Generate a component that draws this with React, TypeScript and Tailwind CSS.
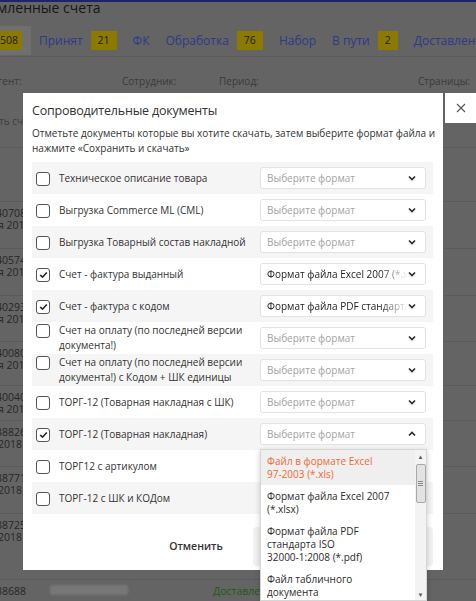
import React from 'react';

type Doc = {
  label: string;
  checked?: boolean;
  value?: string;
  open?: boolean;
};

const docs: Doc[] = [
  { label: 'Техническое описание товара' },
  { label: 'Выгрузка Commerce ML (CML)' },
  { label: 'Выгрузка Товарный состав накладной' },
  { label: 'Счет - фактура выданный', checked: true, value: 'Формат файла Excel 2007 (*.xlsx)' },
  { label: 'Счет - фактура с кодом', checked: true, value: 'Формат файла PDF стандарта ISO 32000-1:2008 (*.pdf)' },
  { label: 'Счет на оплату (по последней версии документа!)' },
  { label: 'Счет на оплату (по последней версии документа!) с Кодом + ШК единицы' },
  { label: 'ТОРГ-12 (Товарная накладная с ШК)' },
  { label: 'ТОРГ-12 (Товарная накладная)', checked: true, open: true },
  { label: 'ТОРГ12 с артикулом' },
  { label: 'ТОРГ-12 с ШК и КОДом' },
];

const formats = [
  'Файл в формате Excel 97-2003 (*.xls)',
  'Формат файла Excel 2007 (*.xlsx)',
  'Формат файла PDF стандарта ISO 32000-1:2008 (*.pdf)',
  'Файл табличного документа 1С:Предприятие (*.mxl)',
];

const tabs = [
  { name: 'Принят', count: '21' },
  { name: 'ФК' },
  { name: 'Обработка', count: '76' },
  { name: 'Набор' },
  { name: 'В пути', count: '2' },
  { name: 'Доставлено' },
];

const rows = [
  { num: '40708', date: 'я 2018', h: 'h-[47px]' },
  { num: '40574', date: 'я 2018', h: 'h-[47px]' },
  { num: '40293', date: 'я 2018', h: 'h-[46px]' },
  { num: '40080', date: 'я 2018', h: 'h-[44px]' },
  { num: '40040', date: 'я 2018', h: 'h-[35px]' },
  { num: '38826', date: '2018', h: 'h-[46px]' },
  { num: '38771', date: '2018', h: 'h-[47px]' },
  { num: '38725', date: '2018', h: 'h-[66px]' },
];

const Chevron = ({ up }: { up?: boolean }) => (
  <svg width="8" height="6" viewBox="0 0 8 6" className={up ? 'rotate-180' : ''}>
    <path d="M1 1.5 L4 4.5 L7 1.5" fill="none" stroke="#2b2b2b" strokeWidth="1.7" />
  </svg>
);

const Checkbox = ({ checked }: { checked?: boolean }) => (
  <span className="mt-[1px] flex h-[14px] w-[14px] shrink-0 items-center justify-center rounded-[3px] border-[1.5px] border-[#555] bg-white">
    {checked && (
      <svg width="9" height="8" viewBox="0 0 9 8">
        <path d="M1.2 4 L3.5 6.2 L7.8 1.5" fill="none" stroke="#222" strokeWidth="1.6" />
      </svg>
    )}
  </span>
);

// words never break on their inner hyphens ("97-2003", "32000-1:2008")
const Words = ({ text }: { text: string }) => (
  <>
    {text.split(' ').map((w, j) => (
      <React.Fragment key={j}>
        {j > 0 && ' '}
        <span className="whitespace-nowrap">{w}</span>
      </React.Fragment>
    ))}
  </>
);

const FormatDropdown = () => (
  <div className="absolute left-0 top-[26px] z-10 flex h-[152px] w-[167px] border border-[#d6d6d6] bg-white shadow-[0_2px_6px_rgba(0,0,0,0.2)]">
    <ul className="flex-1 overflow-hidden">
      {formats.map((f, i) => (
        <li
          key={f}
          className={`pb-[4px] pl-[6px] pr-[18px] pt-[5px] text-[10px] leading-[13px] ${
            i === 0 ? 'bg-[#efefef] text-[#f26a35]' : 'text-[#2b2b2b]'
          }`}
        >
          <Words text={f} />
        </li>
      ))}
    </ul>
    {/* scrollbar */}
    <div className="flex w-[11px] flex-col items-center bg-[#f3f3f3]">
      <span className="mt-[4px] text-[6px] leading-[6px] text-[#555]">▲</span>
      <div className="mt-[4px] flex h-[39px] w-[10px] flex-col items-center justify-center gap-[1px] rounded-[2px] border border-[#a9a9a9] bg-[#e2e2e2]">
        <span className="h-px w-[5px] bg-[#888]" />
        <span className="h-px w-[5px] bg-[#888]" />
        <span className="h-px w-[5px] bg-[#888]" />
      </div>
      <span className="mt-auto mb-[2px] text-[6px] leading-[6px] text-[#555]">▼</span>
    </div>
  </div>
);

const FormatSelect = ({ value, open }: { value?: string; open?: boolean }) => (
  <div className="relative ml-auto w-[166px] shrink-0">
    <div className="flex h-[22px] items-center rounded-[3px] border border-[#e2e2e2] bg-white pl-[6px] pr-[9px]">
      {value ? (
        <span className="flex-1 overflow-hidden whitespace-nowrap text-[10px] text-[#222] [mask-image:linear-gradient(to_right,black_80%,transparent)]">
          {value}
        </span>
      ) : (
        <span className="flex-1 text-[10px] text-[#a3a3a3]">Выберите формат</span>
      )}
      <Chevron up={open} />
    </div>
    {open && <FormatDropdown />}
  </div>
);

const DocumentsModal = () => (
  <>
    <div className="absolute left-[23px] top-[93px] z-20 h-[477px] w-[420px] bg-white pl-[9px] pr-[10px] pt-[8px]">
      <h2 className="text-[12.5px] leading-[20px] tracking-[-0.2px] text-[#333]">Сопроводительные документы</h2>
      <p className="-mr-[6px] mt-[5px] text-[10px] leading-[15px] text-[#333]">
        Отметьте документы которые вы хотите скачать, затем выберите формат файла и нажмите «Сохранить и скачать»
      </p>
      <div className="mt-[6px]">
        {docs.map((d, i) => (
          <div
            key={d.label}
            className={`flex h-[32px] items-center pl-[4px] pr-[7px] ${i % 2 === 0 ? 'bg-[#f5f5f5]' : 'bg-white'}`}
          >
            <div className="flex w-[215px] items-start gap-[9px]">
              <Checkbox checked={d.checked} />
              <span className="w-[192px] text-[10px] leading-[15px] text-[#333]">{d.label}</span>
            </div>
            <FormatSelect value={d.value} open={d.open} />
          </div>
        ))}
      </div>
      <div className="mt-[13px] flex justify-end gap-[8px]">
        <button className="h-[39px] w-[98px] text-[10.5px] font-semibold text-[#333]">Отменить</button>
        <button className="h-[39px] w-[180px] rounded-[4px] bg-[#f2f2f2] text-[10.5px] font-semibold text-[#333]">
          Сохранить и скачать
        </button>
      </div>
    </div>
    <button className="absolute left-[445px] top-[93px] z-20 flex h-[30px] w-[31px] items-center justify-center bg-white">
      <svg width="10" height="10" viewBox="0 0 10 10">
        <path d="M1 1 L9 9 M9 1 L1 9" stroke="#555" strokeWidth="1.1" />
      </svg>
    </button>
  </>
);

export default function App() {
  return (
    <div className="relative h-[601px] w-[476px] overflow-hidden bg-[#646464] font-['Open_Sans',sans-serif]">
      {/* dimmed page behind the dialog */}
      <div className="h-[2px] bg-[#1d2468]" />
      <h1 className="-ml-[3px] h-[13px] text-[14px] leading-[12px] text-[#161616]">мленные счета</h1>

      <div className="mt-[11px] flex h-[31px] items-start border-b border-[#5c5c5c] text-[12px]">
        <div className="flex h-[29px] w-[31px] shrink-0 items-center bg-[#6f6f6f]">
          <span className="-ml-[4px] flex h-[19px] w-[26px] items-center justify-center bg-[#8c7a00] text-[10.5px] text-[#1e1e1e]">
            508
          </span>
        </div>
        {tabs.map((t) => (
          <div key={t.name} className="flex h-[29px] shrink-0 items-center gap-[8px] px-[8px]">
            <span className="text-[#2c3a88]">{t.name}</span>
            {t.count && (
              <span className="flex h-[19px] items-center bg-[#8c7a00] px-[7px] text-[10.5px] text-[#1e1e1e]">
                {t.count}
              </span>
            )}
          </div>
        ))}
      </div>

      <div className="mt-[17px] flex text-[10px] leading-[14px] text-[#3a3a3a]">
        <span className="-ml-[2px] w-[124px]">гент:</span>
        <span className="w-[97px]">Сотрудник:</span>
        <span className="w-[199px]">Период:</span>
        <span>Страницы:</span>
      </div>
      <div className="mt-[4px] flex h-[20px] items-center">
        <span className="ml-[420px] h-[16px] w-[16px] rounded-full bg-[#8c7a00]" />
      </div>

      <div className="mt-[2px] h-[34px] border-b border-[#5a5a5a] text-[10px] leading-[14px] text-[#3e3e3e]">
        <span className="-ml-[1px]">ть счет</span>
      </div>
      <div className="h-[54px] border-b border-[#5a5a5a]" />

      {rows.map((r) => (
        <div
          key={r.num}
          className={`flex flex-col border-b border-[#5a5a5a] pt-[5px] text-[10.5px] leading-[12px] text-[#262626] ${r.h}`}
        >
          <span className="-ml-[4px]">{r.num}</span>
          <span className="-ml-[2px]">{r.date}</span>
        </div>
      ))}
      <div className="flex h-[30px] items-start pt-[5px] text-[10.5px] leading-[12px]">
        <span className="-ml-[4px] w-[54px] text-[#262626]">38688</span>
        <span className="h-[10px] w-[78px] rounded-[2px] bg-[#777] blur-[1px]" />
        <span className="ml-[85px] w-[122px] text-[#1f5a14]">Доставлено</span>
        <span className="ml-[14px] text-[#262626]">Начало набора</span>
      </div>

      <DocumentsModal />
    </div>
  );
}
